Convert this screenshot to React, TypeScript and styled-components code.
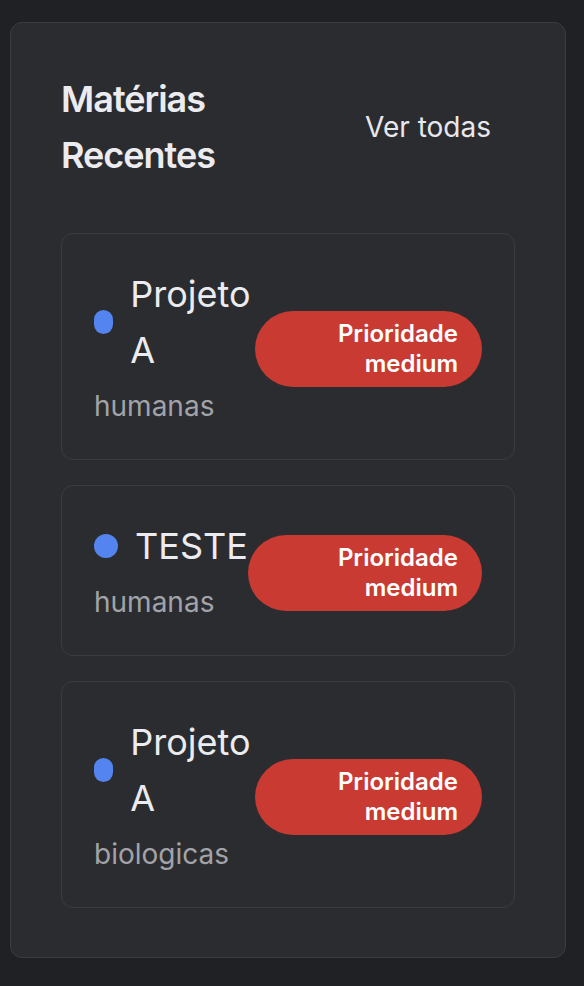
import React from "react";
import styled, { createGlobalStyle } from "styled-components";

const GlobalStyle = createGlobalStyle`
  html, body {
    margin: 0;
    padding: 0;
    background: #202124;
  }
  body {
    font-family: Inter, "Noto Sans", sans-serif;
    -webkit-font-smoothing: antialiased;
  }
  #root {
    padding: 22px 18px 29px 10px;
  }
  * { box-sizing: border-box; }
`;

const Panel = styled.section`
  background: #2b2c30;
  border: 1px solid #3b3c40;
  border-radius: 12px;
  padding: 48px 50px 49px;
`;

const Header = styled.header`
  display: flex;
  align-items: center;
  justify-content: space-between;
  margin-bottom: 50px;
`;

const Title = styled.h2`
  margin: 0;
  font-size: 36px;
  line-height: 56px;
  font-weight: 600;
  color: #ececf0;
  letter-spacing: -1px;
`;

const LinkButton = styled.button`
  background: transparent;
  border: none;
  padding: 6px 24px;
  font-family: inherit;
  font-size: 28px;
  line-height: 40px;
  font-weight: 400;
  color: #e8e8ec;
  white-space: nowrap;
  cursor: pointer;
`;

const List = styled.div`
  display: flex;
  flex-direction: column;
  gap: 25px;
`;

const Card = styled.article`
  display: flex;
  align-items: center;
  justify-content: space-between;
  border: 1px solid #3b3c40;
  border-radius: 12px;
  padding: 32px 32px 33px;
`;

const Info = styled.div`
  display: flex;
  flex-direction: column;
  gap: 8px;
`;

const NameRow = styled.div`
  display: flex;
  align-items: center;
  gap: 17px;
`;

const Dot = styled.span<{ $color: string }>`
  width: 24px;
  height: 24px;
  border-radius: 999px;
  background: ${(p) => p.$color};
`;

const Name = styled.h3`
  margin: 0;
  font-size: 36px;
  line-height: 56px;
  font-weight: 400;
  color: #ececf0;
`;

const Area = styled.p`
  margin: 0;
  font-size: 28px;
  line-height: 40px;
  color: #a2a3a8;
`;

const Badge = styled.span<{ $bg: string }>`
  display: inline-block;
  margin-top: 6px;
  background: ${(p) => p.$bg};
  color: #ffffff;
  border-radius: 999px;
  padding: 8px 24px;
  font-size: 24px;
  line-height: 30px;
  font-weight: 600;
  text-align: right;
`;

type Item = { name: string; area: string; priority: string };

const items: Item[] = [
  { name: "Projeto A", area: "humanas", priority: "medium" },
  { name: "TESTE", area: "humanas", priority: "medium" },
  { name: "Projeto A", area: "biologicas", priority: "medium" },
];

export default function App() {
  return (
    <>
      <GlobalStyle />
      <Panel>
        <Header>
          <Title>Matérias Recentes</Title>
          <LinkButton>Ver todas</LinkButton>
        </Header>
        <List>
          {items.map((it, i) => (
            <Card key={i}>
              <Info>
                <NameRow>
                  <Dot $color="#5484f0" />
                  <Name>{it.name}</Name>
                </NameRow>
                <Area>{it.area}</Area>
              </Info>
              <Badge $bg="#c93a33">Prioridade {it.priority}</Badge>
            </Card>
          ))}
        </List>
      </Panel>
    </>
  );
}
